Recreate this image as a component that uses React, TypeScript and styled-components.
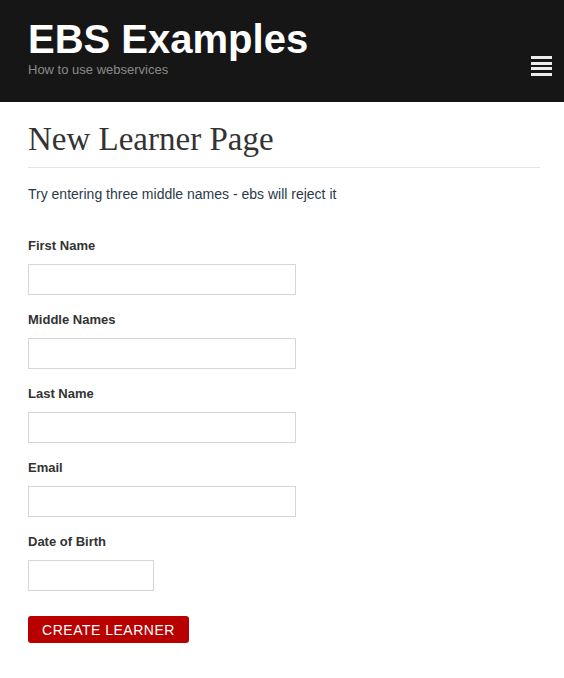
import React from "react";
import styled, { createGlobalStyle } from "styled-components";

const Global = createGlobalStyle`
  html, body { margin: 0; padding: 0; background: #fff; }
  body { font-family: "Liberation Sans", Arial, sans-serif; }
  * { box-sizing: border-box; }
`;

const Header = styled.header`
  height: 102px;
  background: #161616;
  padding: 0 12px 0 28px;
  display: flex;
  align-items: flex-start;
  justify-content: space-between;
`;

const Brand = styled.div`
  display: flex;
  flex-direction: column;
  padding-top: 16px;
`;

const Title = styled.h1`
  margin: 0;
  font-family: "Liberation Sans", Arial, sans-serif;
  font-weight: bold;
  font-size: 40px;
  line-height: 46px;
  color: #fff;
`;

const Subtitle = styled.div`
  font-size: 13px;
  line-height: 16px;
  color: #8a8a8a;
`;

const MenuButton = styled.div`
  margin-top: 56px;
  width: 21px;
  display: flex;
  flex-direction: column;
  gap: 2.5px;
`;

const Bar = styled.span`
  display: block;
  height: 3px;
  background: #ececec;
`;

const Main = styled.main`
  padding: 0 24px 0 28px;
`;

const PageTitle = styled.h2`
  margin: 0;
  padding-top: 19px;
  padding-bottom: 10px;
  font-family: "Liberation Serif", "Times New Roman", serif;
  font-weight: normal;
  font-size: 33px;
  line-height: 36px;
  color: #333;
  border-bottom: 1px solid #e3e3e3;
`;

const Intro = styled.p`
  margin: 16px 0 32px;
  font-size: 14px;
  line-height: 20px;
  color: #2b3a4a;
`;

const Form = styled.form`
  display: flex;
  flex-direction: column;
`;

const Group = styled.div`
  display: flex;
  flex-direction: column;
  margin-bottom: 15px;
`;

const Label = styled.label`
  font-size: 13px;
  font-weight: bold;
  line-height: 20px;
  color: #333;
  margin-bottom: 8px;
`;

const Input = styled.input<{ $w: number }>`
  width: ${(p) => p.$w}px;
  height: 31px;
  border: 1px solid #d6d6d6;
  background: #fff;
  padding: 4px 8px;
  font-size: 14px;
  outline: none;
`;

const Submit = styled.button`
  margin-top: 10px;
  align-self: flex-start;
  width: 161px;
  height: 27px;
  background: #b80000;
  color: #fff;
  border: none;
  border-radius: 3px;
  font-family: "Liberation Sans", Arial, sans-serif;
  font-size: 14px;
  letter-spacing: 0.5px;
  text-transform: uppercase;
  cursor: pointer;
  padding: 0;
`;

const fields: { label: string; w: number }[] = [
  { label: "First Name", w: 268 },
  { label: "Middle Names", w: 268 },
  { label: "Last Name", w: 268 },
  { label: "Email", w: 268 },
  { label: "Date of Birth", w: 126 },
];

export default function App() {
  return (
    <>
      <Global />
      <Header>
        <Brand>
          <Title>EBS Examples</Title>
          <Subtitle>How to use webservices</Subtitle>
        </Brand>
        <MenuButton>
          <Bar />
          <Bar />
          <Bar />
          <Bar />
        </MenuButton>
      </Header>
      <Main>
        <PageTitle>New Learner Page</PageTitle>
        <Intro>Try entering three middle names - ebs will reject it</Intro>
        <Form onSubmit={(e) => e.preventDefault()}>
          {fields.map((f) => (
            <Group key={f.label}>
              <Label>{f.label}</Label>
              <Input $w={f.w} type="text" />
            </Group>
          ))}
          <Submit type="submit">Create Learner</Submit>
        </Form>
      </Main>
    </>
  );
}
